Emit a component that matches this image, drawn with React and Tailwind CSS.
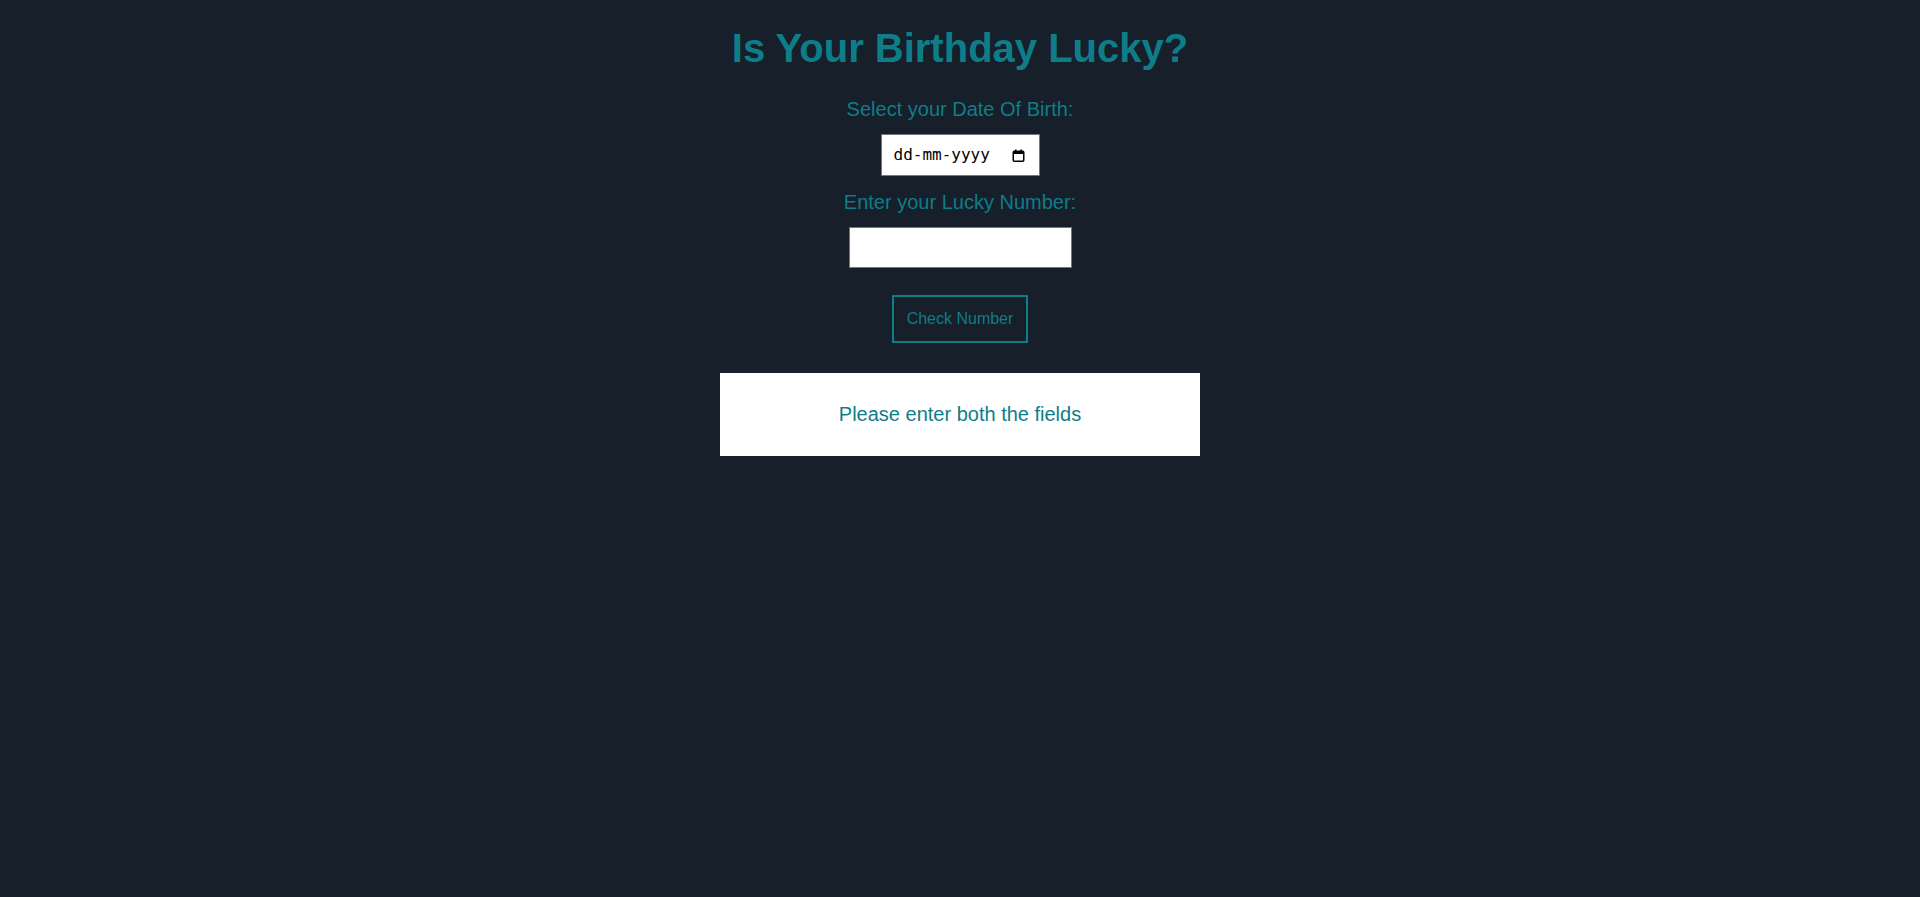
import { useState } from 'react'

function CalendarIcon() {
  return (
    <svg width="13" height="13" viewBox="0 0 13 13" className="shrink-0">
      <rect x="1.25" y="2.25" width="10.5" height="10" rx="1" fill="none" stroke="#000" strokeWidth="1.5" />
      <rect x="1.25" y="2.25" width="10.5" height="2.75" fill="#000" />
      <rect x="3" y="0.5" width="1.5" height="2.5" fill="#000" />
      <rect x="8.5" y="0.5" width="1.5" height="2.5" fill="#000" />
    </svg>
  )
}

export default function App() {
  const [dob, setDob] = useState('')
  const [lucky, setLucky] = useState('')
  const [message, setMessage] = useState('Please enter both the fields')

  const checkNumber = () => {
    if (!dob || !lucky) {
      setMessage('Please enter both the fields')
      return
    }
    const sum = dob.replace(/\D/g, '').split('').reduce((acc, d) => acc + Number(d), 0)
    setMessage(sum % Number(lucky) === 0 ? 'Your birthday is lucky 🥳' : 'Your birthday is not lucky 😔')
  }

  return (
    <div className="min-h-[897px] bg-[#161f2a] font-['Liberation_Sans',Arial,sans-serif] text-[#0f7d88]">
      <div className="flex flex-col items-center">
        <h1 className="mt-[25px] text-[40px] leading-[46px] font-bold">Is Your Birthday Lucky?</h1>

        <label htmlFor="dob" className="mt-[27px] text-[20px] leading-[23px]">
          Select your Date Of Birth:
        </label>
        {/* date field: fixed dd-mm-yyyy look regardless of browser locale */}
        <div className="mt-[13px] flex h-[42px] w-[159px] items-center border border-[#767676] bg-white pl-[12px] pr-[14px]">
          <input
            id="dob"
            type="text"
            placeholder="dd-mm-yyyy"
            value={dob}
            onChange={(e) => setDob(e.target.value)}
            className="min-w-0 flex-1 bg-transparent font-['DejaVu_Sans_Mono',monospace] text-[16px] text-black outline-none placeholder:text-black"
          />
          <CalendarIcon />
        </div>

        <label htmlFor="lucky" className="mt-[15px] text-[20px] leading-[23px]">
          Enter your Lucky Number:
        </label>
        <input
          id="lucky"
          type="number"
          value={lucky}
          onChange={(e) => setLucky(e.target.value)}
          className="mt-[13px] h-[41px] w-[223px] border border-[#767676] bg-white px-2 text-[16px] text-black"
        />

        <button
          onClick={checkNumber}
          className="mt-[27px] border-2 border-[#0f7d88] bg-transparent p-[0.8rem] text-[16px] leading-[18px] text-[#0f7d88]"
        >
          Check Number
        </button>

        <div className="mt-[30px] flex h-[83px] w-[480px] items-center justify-center bg-white">
          <p className="text-[20px] leading-[23px] text-[#0f7d88]">{message}</p>
        </div>
      </div>
    </div>
  )
}
